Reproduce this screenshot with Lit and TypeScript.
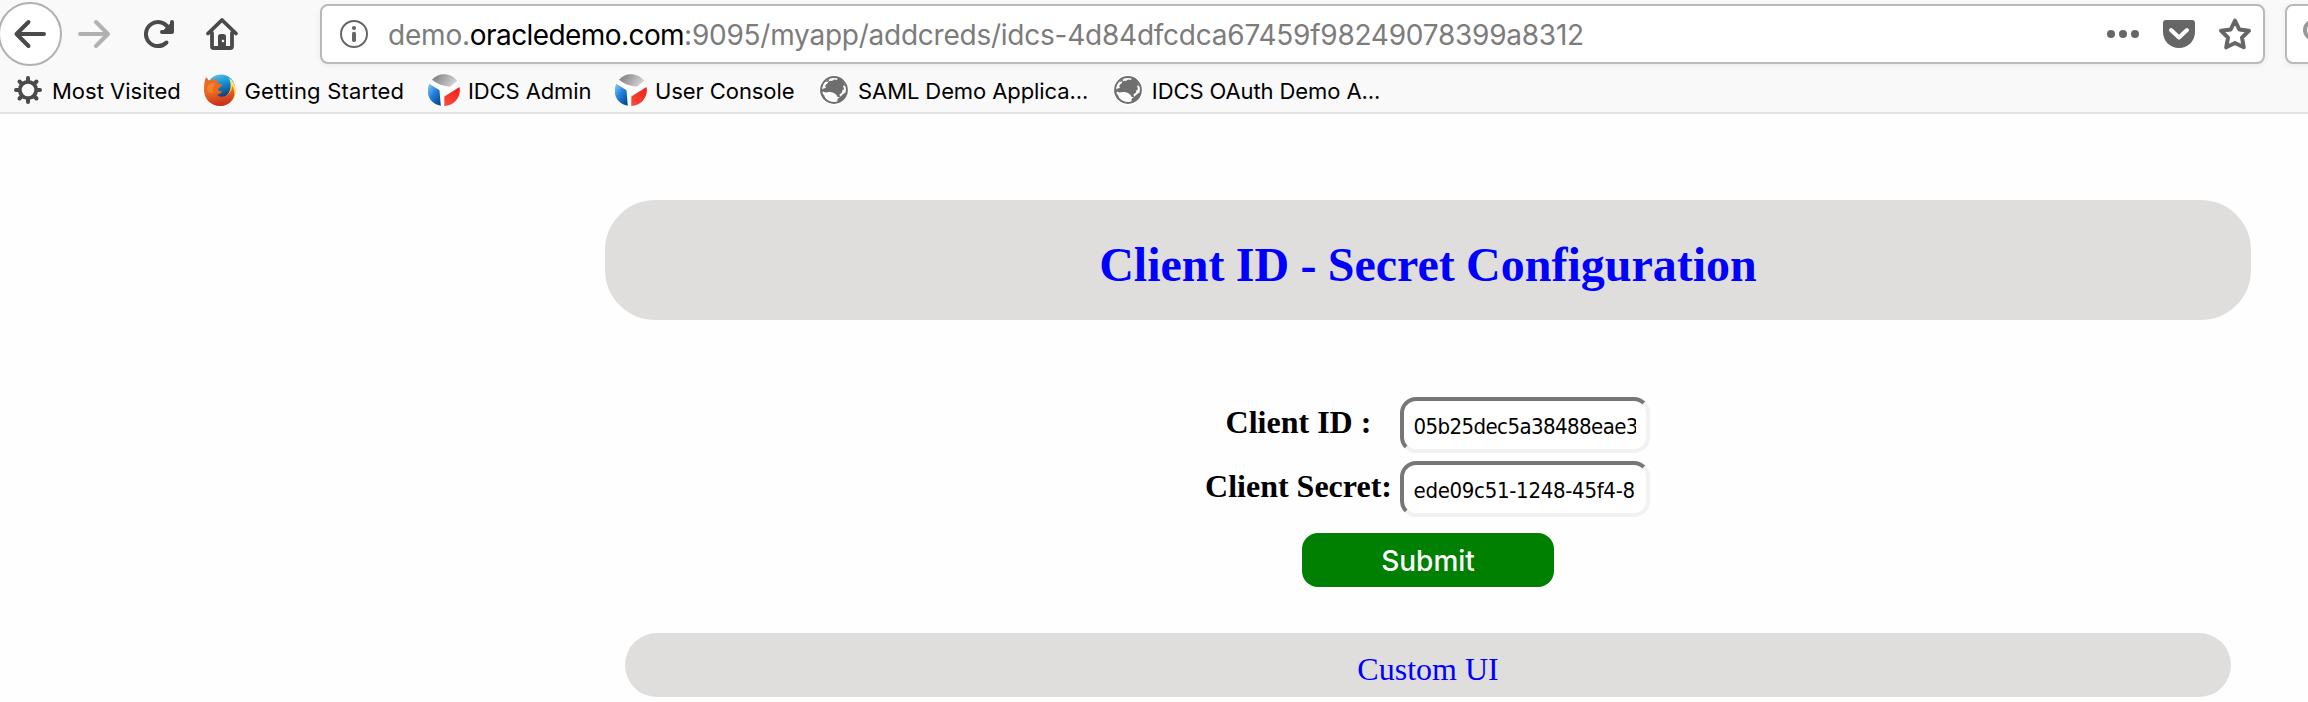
import { LitElement, html, css, svg } from "lit";
import { customElement } from "lit/decorators.js";

const gear = svg`
  <g stroke="#4a4a4a" stroke-width="4" stroke-linecap="round" fill="none">
    <circle cx="16" cy="16" r="8.2" stroke-width="3.8"/>
    <path d="M16 4V7M16 25V28M4 16H7M25 16H28M7.5 7.5L9.5 9.5M22.5 22.5L24.5 24.5M24.5 7.5L22.5 9.5M9.5 22.5L7.5 24.5"/>
  </g>`;

const firefox = svg`
  <defs>
    <linearGradient id="sea" x1="0" y1="0" x2="0.3" y2="1"><stop offset="0" stop-color="#62cdf5"/><stop offset=".45" stop-color="#128fd2"/><stop offset="1" stop-color="#16265c"/></linearGradient>
    <linearGradient id="fur" x1="0" y1="0" x2="0.2" y2="1"><stop offset="0" stop-color="#e8662c"/><stop offset=".55" stop-color="#ee6a20"/><stop offset="1" stop-color="#c9331d"/></linearGradient>
    <linearGradient id="tail" x1="0" y1="0" x2="0" y2="1"><stop offset="0" stop-color="#fff0a0"/><stop offset=".5" stop-color="#fbd136"/><stop offset="1" stop-color="#ee7a1c"/></linearGradient>
  </defs>
  <circle cx="17" cy="14.5" r="14" fill="url(#sea)"/>
  <path d="M25 4C31 8 33 15 31 21C29 28 23 32 16 32C10 30 17 26 22 22C27 18 28 11 25 4Z" fill="url(#tail)"/>
  <path d="M2 3L5 6.5C7 5.5 9 5.5 11 6L14 4C13 6 13 8 14 9L18 10.5C18 13 14.5 13 14 15.5C14 17 16 17.500 18.500 17C16.500 20 14 20.500 13 20.500C15 23.500 20 23.500 24 20.500C27 18 28 15 28 12C31 17 31 22 28 26C25 30 21 32 16 32C7 32 0 25 0 16C0 11 0.500 7 2 3Z" fill="url(#fur)"/>
  <path d="M3 13C5 9 8 8 11 9C10 12 8 15 9 19C5 19 3 17 3 13Z" fill="#f39335" opacity=".6"/>`;

const idcs = svg`
  <defs>
    <linearGradient id="top" x1="0" y1="0" x2="1" y2=".35"><stop offset="0" stop-color="#77777a"/><stop offset="1" stop-color="#d0d0d0"/></linearGradient>
    <linearGradient id="left" x1="0" y1="0" x2=".8" y2="1"><stop offset="0" stop-color="#8fd0fa"/><stop offset=".5" stop-color="#237fdc"/><stop offset="1" stop-color="#064a90"/></linearGradient>
    <linearGradient id="right" x1=".9" y1="0" x2=".2" y2="1"><stop offset="0" stop-color="#f01f1a"/><stop offset="1" stop-color="#fb4a38"/></linearGradient>
  </defs>
  <circle cx="16" cy="16" r="15" fill="#fff"/>
  <path d="M4 5.800C9.500 -1.500 22.500 -2 29.300 6.800L22 12.800C15 12.300 9 10 4 5.800Z" fill="url(#top)"/>
  <path d="M1.300 9.800L11.500 16.300L12.800 31.700C1.500 30 -3 19 1.300 9.800Z" fill="url(#left)"/>
  <path d="M31.500 13C33.500 22 27 31.500 16.300 32V22.600Z" fill="url(#right)"/>`;

const globe = svg`
  <circle cx="16" cy="16" r="15.3" fill="#fff"/>
  <circle cx="16" cy="16" r="12.900" fill="#fff" stroke="#6f6f6f" stroke-width="2"/>
  <path d="M2.500 17C4 14.500 6 14.500 8 14C6.500 12 8 10 10 9C9.500 7.500 12 6.500 14 7L16 5.500L19 6L20 3.500C24 5 26.500 8.500 27 12L25 11.500L26 15.500L24.500 16L24 18.500L21.500 20.500L22 23L19.500 23C18.500 19.500 15 18 11 18L7.500 18.500L5 17.500L3 20Z" fill="#6f6f6f"/>
  <path d="M19.500 25L23 22L26 19.500L28.500 18C27.500 23 24.500 27 19.500 29Z" fill="#6f6f6f"/>
  <path d="M3.500 19L6 21L7.500 24.500L11 27.500L13 28.500C8 28 4 25 3.500 19Z" fill="#6f6f6f"/>
  <path d="M7 8L11.500 4.500L10.500 7.500Z" fill="#6f6f6f"/>`;

const BOOKMARKS = [
  { icon: gear, label: "Most Visited", cls: "" },
  { icon: firefox, label: "Getting Started", cls: "loose" },
  { icon: idcs, label: "IDCS Admin", cls: "tight" },
  { icon: idcs, label: "User Console", cls: "tight" },
  { icon: globe, label: "SAML Demo Applica...", cls: "tight" },
  { icon: globe, label: "IDCS OAuth Demo A...", cls: "tight" },
];

@customElement("browser-chrome")
class BrowserChrome extends LitElement {
  static styles = css`
    :host { display: block; height: 112px; background: #f9f9fa; border-bottom: 2px solid #e1e1e2; overflow: hidden; font-family: Inter, Roboto, sans-serif; }
    svg { display: block; flex: none; }
    .nav { display: flex; height: 68px; }
    .controls { width: 320px; flex: none; }
    .url { box-sizing: border-box; width: 1945px; height: 60px; margin-top: 4px; flex: none; display: flex; align-items: center; background: #fff; border: 2px solid #b9b9b9; border-radius: 8px; box-shadow: 0 2px 6px rgba(0,0,0,.06); padding-left: 16px; padding-right: 10px; }
    .address { flex: 1; margin-left: 18px; padding-top: 1px; font-size: 28px; line-height: 34px; color: #7c7c7c; white-space: nowrap; }
    .sub { letter-spacing: -.2px; }
    .host { color: #000; letter-spacing: -.58px; }
    .path { letter-spacing: -.24px; }
    .search { box-sizing: border-box; flex: none; width: 300px; height: 60px; margin: 4px 0 0 20px; background: #fff; border: 2px solid #b9b9b9; border-radius: 8px; box-shadow: 0 2px 6px rgba(0,0,0,.06); padding: 12px 16px; }
    .bookmarks { display: flex; align-items: center; height: 44px; padding-left: 12px; gap: 23.700px; }
    .item { display: flex; align-items: center; gap: 8px; font-size: 22px; line-height: 28px; white-space: nowrap; color: #000; }
    .item span { padding-top: 2px; }
    .loose span { letter-spacing: .2px; }
    .tight span { letter-spacing: -.1px; }
  `;
  render() {
    return html`
      <div class="nav">
        <svg class="controls" width="320" height="68" viewBox="0 0 320 68" fill="none" stroke="#4a4a4a" stroke-width="4" stroke-linecap="round" stroke-linejoin="round">
          <circle cx="30" cy="34" r="31" fill="#fff" stroke="#b1b1b1" stroke-width="2"/>
          <path d="M44 34H17M28.500 22L16.500 34L28.500 46"/>
          <path d="M80 34H107M96 22L108 34L96 46" stroke="#b1b1b1"/>
          <path d="M166.500 42.500A12 12 0 1 1 168 27.500"/>
          <path d="M172 22V32H162" />
          <path d="M165 30L171 24L171 31Z" fill="#4a4a4a" stroke-width="2"/>
          <path d="M208 33.500L222 20L236 33.500" stroke-width="3.800"/>
          <path d="M212 33V46.500Q212 48 213.500 48H230.500Q232 48 232 46.500V33" stroke-width="3.800"/>
          <path d="M219.500 48V36.500Q219.500 35.500 220.500 35.500H223.500Q224.500 35.500 224.500 36.500V48Z" fill="#4a4a4a" stroke-width="3"/>
          <circle cx="223" cy="41" r="1.300" fill="#f9f9fa" stroke="none"/>
        </svg>
        <div class="url">
          <svg width="32" height="32" viewBox="0 0 32 32">
            <circle cx="16" cy="16" r="13" fill="none" stroke="#666" stroke-width="2"/>
            <circle cx="16" cy="10" r="2.100" fill="#666"/><rect x="14" y="13.700" width="4" height="10.300" rx="1.800" fill="#666"/>
          </svg>
          <div class="address"><span class="sub">demo.</span><span class="host">oracledemo.com</span><span class="path">:9095/myapp/addcreds/idcs-4d84dfcdca67459f98249078399a8312</span></div>
          <svg width="148" height="40" viewBox="0 0 148 40">
            <g fill="#666"><circle cx="6" cy="20" r="4"/><circle cx="18" cy="20" r="4"/><circle cx="30" cy="20" r="4"/>
            <path d="M61 6H87Q90 6 90 9V18C90 27 83 34 74 34S58 27 58 18V9Q58 6 61 6Z"/></g>
            <path d="M66 16L74 23.500L82 16" fill="none" stroke="#fff" stroke-width="4" stroke-linecap="round" stroke-linejoin="round"/>
            <path d="M130 6.500L134.300 15.500L144 16.700L137 23.700L138.800 33.300L130 29L121.200 33.300L123 23.700L116 16.700L125.700 15.500Z" fill="none" stroke="#666" stroke-width="4" stroke-linejoin="round"/>
          </svg>
        </div>
        <div class="search">
          <svg width="32" height="32" viewBox="0 0 32 32" fill="none" stroke="#999" stroke-width="4" stroke-linecap="round"><circle cx="11" cy="12" r="9"/><path d="M18 19L28 29"/></svg>
        </div>
      </div>
      <div class="bookmarks">
        ${BOOKMARKS.map((b) => html`<div class="item ${b.cls}"><svg width="32" height="32" viewBox="0 0 32 32">${b.icon}</svg><span>${b.label}</span></div>`)}
      </div>`;
  }
}

@customElement("app-root")
class AppRoot extends LitElement {
  static styles = css`
    :host { display: block; height: 702px; overflow: hidden; background: #fefefe; font-family: "Liberation Serif", serif; }
    .page { display: flex; flex-direction: column; align-items: center; width: 1646px; margin: 86px 0 0 605px; }
    .title { box-sizing: border-box; width: 100%; height: 120px; margin: 0; padding-top: 10px; border-radius: 50px; background: #dfdedc; color: #00f; font-size: 48px; line-height: 110px; text-align: center; word-spacing: -.7px; }
    .form { display: grid; grid-template-columns: 188px 250px; column-gap: 7px; row-gap: 8px; margin: 77px 1px 0 0; padding-right: 1px; }
    label { text-align: center; font-weight: bold; font-size: 32px; line-height: 50px; height: 56px; white-space: nowrap; color: #000; }
    input { box-sizing: border-box; width: 250px; height: 56px; margin: 0; padding: 2px 10px 0; border: 4px solid; border-color: #767676 #f2f2f2 #f2f2f2 #767676; border-radius: 16px; background: #fff; color: #000; outline: none; font: 22px "DejaVu Sans Condensed", "DejaVu Sans", sans-serif; }
    .id { letter-spacing: -.58px; }
    .secret { letter-spacing: -.3px; }
    button { width: 252px; height: 54px; margin: 16px 0 0; padding: 2px 0 0; border: 0; border-radius: 16px; background: #008000; color: #fff; font: 500 28px Inter, Roboto, sans-serif; letter-spacing: 0; }
    .footer { box-sizing: border-box; width: 1606px; height: 64px; margin-top: 46px; padding-top: 9px; border-radius: 32px; background: #dfdedc; color: #00f; font-size: 32px; line-height: 55px; text-align: center; }
  `;
  render() {
    return html`
      <browser-chrome></browser-chrome>
      <main class="page">
        <h1 class="title">Client ID - Secret Configuration</h1>
        <div class="form">
          <label for="id">Client ID :</label><input id="id" class="id" value="05b25dec5a38488eae3" />
          <label for="secret">Client Secret:</label><input id="secret" class="secret" value="ede09c51-1248-45f4-86" />
        </div>
        <button type="button">Submit</button>
        <div class="footer">Custom UI</div>
      </main>`;
  }
}
